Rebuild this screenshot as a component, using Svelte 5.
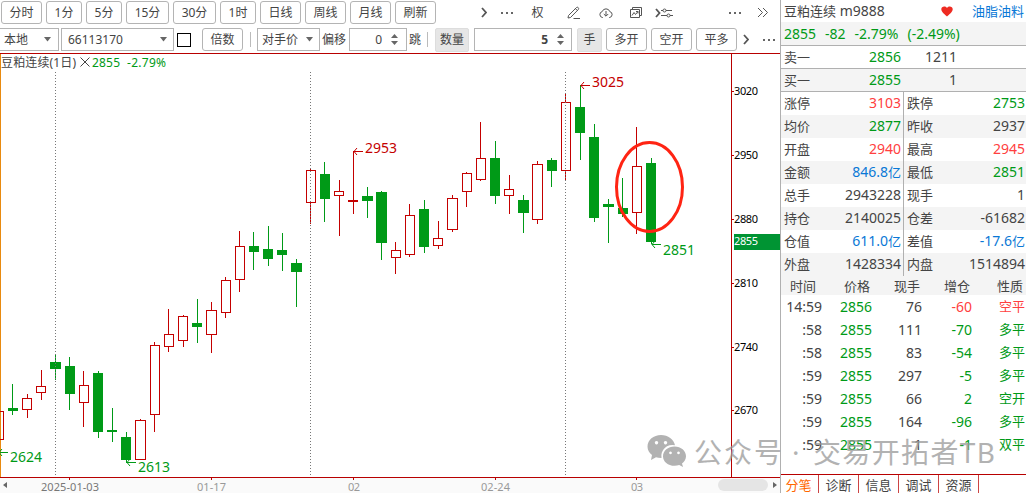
<script>
  const periods = ["分时", "1分", "5分", "15分", "30分", "1时", "日线", "周线", "月线", "刷新"];

  // x of the wick, high, low, body top, body bottom, body left, body width, rising
  const candles = [
    [-1, 411, 440, 411, 440, -6, 10, 1],
    [12, 384, 415, 408, 411, 8, 10, 0],
    [27, 394, 418, 398, 410, 22, 10, 1],
    [41, 370, 400, 386, 393, 36, 10, 1],
    [55, 354, 380, 362, 369, 50, 11, 0],
    [69, 357, 410, 366, 394, 65, 10, 0],
    [83, 371, 427, 385, 403, 79, 10, 1],
    [98, 371, 438, 373, 432, 93, 10, 0],
    [112, 408, 442, 430, 432, 107, 10, 0],
    [126, 432, 463, 437, 460, 121, 10, 0],
    [140, 419, 460, 420, 460, 135, 11, 1],
    [154, 342, 432, 345, 415, 150, 10, 1],
    [168, 309, 352, 334, 347, 164, 10, 1],
    [183, 315, 347, 316, 341, 178, 10, 1],
    [197, 299, 343, 323, 327, 192, 10, 0],
    [211, 302, 353, 310, 335, 206, 11, 1],
    [225, 277, 318, 280, 313, 221, 10, 1],
    [239, 231, 292, 246, 280, 235, 10, 1],
    [253, 232, 270, 246, 252, 249, 10, 0],
    [268, 226, 266, 249, 259, 263, 10, 0],
    [282, 233, 271, 250, 255, 277, 10, 0],
    [296, 259, 307, 263, 272, 291, 11, 0],
    [310, 168, 224, 170, 203, 306, 10, 1],
    [324, 162, 222, 174, 199, 320, 10, 0],
    [339, 180, 236, 191, 196, 334, 10, 1],
    [353, 151, 214, 200, 202, 348, 10, 1],
    [367, 187, 218, 196, 201, 362, 11, 0],
    [381, 191, 260, 192, 243, 376, 11, 0],
    [395, 242, 274, 250, 258, 391, 10, 1],
    [409, 204, 257, 215, 255, 405, 10, 1],
    [424, 200, 253, 209, 247, 419, 10, 0],
    [438, 221, 249, 238, 246, 433, 10, 1],
    [452, 195, 232, 198, 230, 447, 11, 1],
    [466, 172, 207, 173, 192, 462, 10, 1],
    [480, 122, 181, 158, 180, 476, 10, 1],
    [495, 141, 204, 158, 196, 490, 10, 0],
    [509, 175, 214, 189, 196, 504, 10, 1],
    [523, 195, 233, 200, 213, 518, 11, 0],
    [537, 161, 224, 164, 220, 532, 11, 1],
    [551, 158, 187, 160, 171, 547, 10, 0],
    [565, 94, 180, 102, 171, 561, 10, 1],
    [580, 85, 160, 107, 133, 575, 10, 0],
    [594, 124, 222, 137, 218, 589, 10, 0],
    [608, 199, 243, 204, 207, 603, 11, 0],
    [622, 178, 217, 208, 214, 618, 10, 0],
    [636, 127, 234, 166, 213, 632, 10, 1],
    [651, 158, 244, 163, 242, 646, 10, 0],
  ];

  const marks = [
    { text: "3025", x: 592, y: 87, ax: 581, ay: 85, up: true },
    { text: "2953", x: 365, y: 153, ax: 354, ay: 151, up: true },
    { text: "2851", x: 663, y: 255, ax: 652, ay: 244 },
    { text: "2624", x: 10, y: 462, ax: -1, ay: 452 },
    { text: "2613", x: 138, y: 472, ax: 127, ay: 462 },
  ];

  const scale = [[3020, 91], [2950, 155], [2880, 219], [2810, 283], [2740, 347], [2670, 410]];

  const dates = [
    { text: "2025-01-03", x: 41, w: 58, tick: 69, dark: true },
    { text: "01-17", x: 197, w: 29, tick: 211 },
    { text: "02", x: 348, w: 12, tick: 353 },
    { text: "02-24", x: 481, w: 29, tick: 495 },
    { text: "03", x: 631, w: 12, tick: 636 },
  ];

  const stats = [
    ["涨停", "3103", "up", "跌停", "2753", "down"],
    ["均价", "2877", "down", "昨收", "2937", ""],
    ["开盘", "2940", "up", "最高", "2945", "up"],
    ["金额", "846.8", "money", "最低", "2851", "down"],
    ["总手", "2943228", "", "现手", "1", ""],
    ["持仓", "2140025", "", "仓差", "-61682", ""],
    ["仓值", "611.0", "money", "差值", "-17.6", "money"],
    ["外盘", "1428334", "", "内盘", "1514894", ""],
  ];

  const ticks = [
    ["14:59", "2856", "76", "-60", "空平", "up"],
    [":58", "2855", "111", "-70", "多平", "down"],
    [":58", "2855", "83", "-54", "多平", "down"],
    [":59", "2855", "297", "-5", "多平", "down"],
    [":59", "2855", "66", "2", "空开", "down"],
    [":59", "2855", "164", "-96", "多平", "down"],
    [":59", "2855", "1", "-1", "双平", "down"],
  ];

  const tabs = ["分笔", "诊断", "信息", "调试", "资源"];
</script>

{#snippet spinner()}
  <svg class="spin" width="7" height="13" viewBox="0 0 7 13">
    <path d="M0 5 L3.5 1 L7 5Z M0 8 L3.5 12 L7 8Z" fill="#666" />
  </svg>
{/snippet}

{#snippet caret()}
  <svg class="caret" width="7" height="5" viewBox="0 0 7 5"><path d="M0 0H7L3.5 4.5Z" fill="#777" /></svg>
{/snippet}

{#snippet dots()}
  <svg width="14" height="4" viewBox="0 0 14 4"><path d="M1 1h2v2h-2z M6 1h2v2h-2z M11 1h2v2h-2z" fill="#555" /></svg>
{/snippet}

<div class="app">
  <div class="left">
    <div class="toolbar">
      <div class="row periods">
        <div class="buttons">
          {#each periods as p}
            <button>{p}</button>
          {/each}
        </div>
        <div class="icons">
          <svg width="6" height="11" viewBox="0 0 6 11"><path d="M1 1l4 4.5-4 4.5" class="thick" /></svg>
          {@render dots()}
          <span>权</span>
          <svg width="14" height="14" viewBox="0 0 14 14">
            <path d="M1.5 9.5L9.5 1.5Q10.3 .8 11.2 1.6T11.2 3.7L3.5 11.5L1 12Z M8.5 2.7l2 2 M6.5 12.5H13" />
          </svg>
          <svg width="14" height="14" viewBox="0 0 14 14">
            <path d="M4 11.5H3.5A3 3 0 0 1 3.2 5.6A4 4 0 0 1 10.8 5.6A3 3 0 0 1 10.5 11.5H10 M7 5v5 M4.8 8L7 10.2 9.2 8" />
          </svg>
          <svg width="14" height="14" viewBox="0 0 14 14">
            <path d="M3.5 3.500V1.500H12.500V9.500H11 M1.500 3.500H10.500V11.500H1.500Z M3 9.500L5 6.500 6.500 8.500 9 5.500 M7 5.500H9V7.500" />
          </svg>
          <svg width="18" height="12" viewBox="0 0 18 12">
            <path d="M1 2l3.5 4L1 10" class="thick" />
            <path d="M6 3.500h2 M11 3.500h6 M6 8.500h6 M15 8.500h3" />
            <circle cx="9.500" cy="3.500" r="1.500" /><circle cx="13.500" cy="8.500" r="1.500" />
          </svg>
          <i></i>
          {@render dots()}
          <i></i>
          <svg width="12" height="11" viewBox="0 0 12 11"><path d="M1 1l4.500 4.500L1 10 M6 1l4.500 4.500L6 10" /></svg>
        </div>
      </div>
      <div class="row order">
        <div class="box place">本地{@render caret()}</div>
        <div class="box account">66113170{@render caret()}</div>
        <div class="check"></div>
        <button>倍数</button>
        <div class="sep"></div>
        <div class="box price">对手价{@render caret()}</div>
        <span class="offset">偏移</span>
        <div class="box num">0{@render spinner()}</div>
        <span class="jump">跳</span>
        <div class="sep short"></div>
        <div class="tag">数量</div>
        <div class="box qty"><b>5</b>{@render spinner()}</div>
        <div class="tag hand">手</div>
        <button class="act">多开</button>
        <button class="act">空开</button>
        <button class="act">平多</button>
        <svg class="more" width="6" height="11" viewBox="0 0 6 11"><path d="M1 1l4 4.5-4 4.5" class="thick" /></svg>
        {@render dots()}
      </div>
    </div>

    <svg class="chart" width="780" height="439" viewBox="0 54 780 439">
      <rect x="0" y="478" width="780" height="15" fill="#fafafa" />
      <rect x="0" y="54" width="1" height="423" fill="#e88a10" />

      <text x="1" y="67" class="title" textLength="75">豆粕连续(1日)</text>
      <path d="M80.5 57.5l9 9 M89.5 57.5l-9 9" stroke="#444" fill="none" />
      <g class="title down">
        <text x="92" y="67" textLength="28">2855</text>
        <text x="127" y="67" textLength="39">-2.79%</text>
      </g>

      {#each candles as [x, high, low, top, bottom, left, w, rising]}
        {#if rising}
          <rect {x} y={high} width="1" height={top - high} fill="#c40000" />
          <rect {x} y={bottom} width="1" height={low - bottom} fill="#c40000" />
          <rect x={left + 0.5} y={top + 0.5} width={w - 1} height={bottom - top - 1} fill="none" stroke="#c40000" />
        {:else}
          <rect {x} y={high} width="1" height={low - high} fill="#009a17" />
          <rect x={left} y={top} width={w} height={bottom - top} fill="#009a17" />
        {/if}
      {/each}

      {#each [55, 310, 565] as x}
        <path d="M{x + 0.5} 72V476" stroke="#777" stroke-dasharray="1 2" />
      {/each}

      {#each marks as m}
        <g class={m.up ? "high" : "low"}>
          <path d="M{m.ax} {m.ay + 0.5}h9 M{m.ax + 3} {m.ay - 3}l-3 3.5 3 3.5" />
          <text x={m.x} y={m.y} textLength="32">{m.text}</text>
        </g>
      {/each}

      <ellipse cx="649.5" cy="187" rx="33" ry="44.5" fill="none" stroke="#ff2413" stroke-width="3" />

      <path d="M731.5 54V477 M0 477.5H780" stroke="#b80000" />
      {#each scale as [value, y]}
        <rect x="732" {y} width="2" height="1" fill="#b80000" />
        <text class="scale" x="734" y={y + 4} textLength="24">{value}</text>
      {/each}
      <rect x="734" y="234" width="46" height="16" fill="#009433" />
      <text class="scale now" x="734" y="245" textLength="24">2855</text>

      {#each dates as d}
        <rect x={d.tick} y="478" width="1" height="2" fill="#b80000" />
        <text class="date" class:dark={d.dark} x={d.x} y="491" textLength={d.w}>{d.text}</text>
      {/each}
      <path d="M7 482v6l-4-3z M773 482v6l4-3z" fill="#666" />
      <rect x="718" y="479" width="50" height="12" rx="6" fill="#e5e5e5" />
    </svg>
  </div>

  <div class="panel">
    <div class="name">
      <span><em>豆粕连续</em> m9888</span>
      <svg width="12" height="11" viewBox="0 0 12 11">
        <path d="M6 10.5C4 8.5.3 6 .3 3.2C.3.4 4.2-.6 6 2C7.8-.6 11.7.4 11.7 3.2C11.7 6 8 8.5 6 10.5Z" fill="#ee2b22" />
      </svg>
      <em class="money">油脂油料</em>
    </div>
    <div class="last down"><span>2855</span><span>-82</span><span>-2.79%</span><span>(-2.49%)</span></div>
    <div class="quote"><em>卖一</em><span class="down">2856</span><span>1211</span></div>
    <div class="quote grey"><em>买一</em><span class="down">2855</span><span>1</span></div>
    <div class="stats">
      {#each stats as [a, av, ac, b, bv, bc]}
        <div class="stat">
          <div><em>{a}</em><span class={ac}>{av}{#if ac === "money"}<em>亿</em>{/if}</span></div>
          <div><em>{b}</em><span class={bc}>{bv}{#if bc === "money"}<em>亿</em>{/if}</span></div>
        </div>
      {/each}
    </div>
    <div class="tick head"><em>时间</em><em>价格</em><em>现手</em><em>增仓</em><em>性质</em></div>
    <div class="ticks">
      {#each ticks as [time, price, vol, diff, kind, tone]}
        <div class="tick">
          <span>{time}</span><span class="down">{price}</span><span>{vol}</span>
          <span class={tone}>{diff}</span><em class={tone}>{kind}</em>
        </div>
      {/each}
    </div>
    <div class="tabs">
      {#each tabs as t, i}
        <div class:active={i === 0}>{t}</div>
      {/each}
    </div>
  </div>

  <svg class="watermark" width="350" height="40" viewBox="0 0 350 40">
    <path
      fill-rule="evenodd"
      d="M14 2C6.500 2 .5 7 .5 13.500C.5 17 2.200 20 5 22L4 27L9 24.200Q11 25 14.500 25A11 11 0 0 1 28 12.300C27 6.500 21 2 14 2Z
        M9.500 8a1.700 1.700 0 1 0 .01 0Z M18.500 8a1.700 1.700 0 1 0 .01 0Z
        M27.500 13.500C21 13.500 16 17.800 16 23.200C16 28.600 21 32.800 27.500 32.800Q30 32.800 32.200 32L36 34L35 30.500C37.500 28.700 39 26 39 23.200C39 17.800 34 13.500 27.500 13.500Z
        M23.500 18.500a1.400 1.400 0 1 0 .01 0Z M31.500 18.500a1.400 1.400 0 1 0 .01 0Z"
    />
    <text x="47" y="30" textLength="88">公众号</text>
    <text x="145" y="30">·</text>
    <text x="166" y="30" textLength="182">交易开拓者TB</text>
  </svg>
</div>

<style>
  :global(body) {
    background: #fff;
  }

  .app {
    position: relative;
    display: flex;
    width: 1026px;
    height: 493px;
    overflow: hidden;
    font-family: "Noto Sans", "Noto Sans CJK SC", sans-serif;
    font-size: 12px;
    color: #444;
  }

  .app * {
    box-sizing: border-box;
  }

  .left {
    width: 780px;
    flex: none;
  }

  svg {
    display: block;
    flex: none;
  }

  .toolbar {
    height: 54px;
    padding-top: 1px;
    border-bottom: 1px solid #b80000;
  }

  .row {
    display: flex;
    height: 23px;
    align-items: center;
    line-height: 21px;
    white-space: nowrap;
  }

  .row path,
  .row circle {
    fill: none;
    stroke: #555;
  }

  .row path[fill] {
    fill: #666;
    stroke: none;
  }

  .row .thick {
    stroke-width: 1.8;
  }

  .order {
    margin-top: 4px;
  }

  button {
    height: 23px;
    padding: 0;
    border: 1px solid #b4b4b4;
    border-radius: 3px;
    background: #fff;
    font: inherit;
    line-height: 20px;
    color: inherit;
  }

  .buttons {
    display: grid;
    grid-template-columns: 45px 40px 40px 47px 47px 40px 45px 45px 45px 45px;
    margin-left: 1px;
  }

  .buttons button {
    margin-right: 4px;
  }

  .icons {
    display: grid;
    grid-template-columns: 19px 27px 35px 37px 27px 34px 22px 52px 16px 8px 23px;
    margin-left: 34px;
    align-items: center;
    justify-items: center;
  }

  .box {
    display: flex;
    height: 23px;
    border: 1px solid #b4b4b4;
    align-items: center;
    justify-content: space-between;
  }

  .place {
    width: 59px;
    padding: 0 7px 0 4px;
    border-left: 0;
  }

  .account {
    width: 113px;
    margin-left: 2px;
    padding: 0 6px;
  }

  .check {
    width: 14px;
    height: 14px;
    margin: 0 11px 0 3px;
    border: 1px solid #000;
  }

  .order button {
    width: 41px;
  }

  .sep {
    width: 1px;
    height: 15px;
    margin: 0 6px 0 7px;
    background: #bbb;
  }

  .price {
    width: 63px;
    padding: 0 6px 0 4px;
  }

  .offset {
    width: 24px;
    margin: 0 3px 0 2px;
  }

  .num,
  .qty {
    width: 58px;
    padding-right: 8px;
    justify-content: flex-end;
    gap: 9px;
  }

  .jump {
    margin-left: 2px;
  }

  .sep.short {
    margin: 0 7px 0 6px;
  }

  .tag {
    width: 34px;
    height: 24px;
    border: 1px solid #ddd;
    border-radius: 2px;
    background: #e6e6e6;
    text-align: center;
  }

  .qty {
    width: 98px;
    margin: 0 5px;
    padding-right: 7px;
  }

  .hand {
    width: 25px;
  }

  .act {
    margin-left: 4px;
  }

  .more {
    margin: 0 13px 0 6px;
  }

  .chart text {
    fill: #444;
  }

  .chart .title {
    font-size: 12px;
  }

  .chart .down text,
  .chart .low text {
    fill: #009a17;
  }

  .high text,
  .low text {
    font-size: 14px;
  }

  .chart .high text {
    fill: #c40000;
  }

  .high path {
    fill: none;
    stroke: #c40000;
  }

  .low path {
    fill: none;
    stroke: #009a17;
  }

  .chart .scale {
    font-size: 11px;
    fill: #000;
  }

  .chart .now {
    fill: #fff;
  }

  .chart .date {
    font-size: 11px;
    fill: #999;
  }

  .chart .dark {
    fill: #777;
  }

  .panel {
    width: 246px;
    border-left: 1px solid #b0b0b0;
    font-size: 14px;
    line-height: 22px;
    white-space: nowrap;
  }

  em {
    font-size: 13px;
    font-style: normal;
  }

  .up {
    color: #ff4040;
  }

  .down {
    color: #009a17;
  }

  .money {
    color: #0a78d6;
  }

  .name {
    display: flex;
    height: 22px;
    padding-left: 3px;
    align-items: center;
  }

  .name span {
    width: 157px;
  }

  .name .money {
    margin-left: 19px;
  }

  .last {
    display: flex;
    height: 24px;
    padding-left: 3px;
    gap: 9px;
    border-bottom: 1px solid #b0b0b0;
    background: #f4f4f4;
    line-height: 24px;
  }

  .quote {
    display: grid;
    grid-template-columns: 50px 67px 56px;
    height: 23px;
    padding-left: 3px;
    border-bottom: 1px solid #b0b0b0;
    text-align: right;
  }

  .quote em {
    text-align: left;
  }

  .grey {
    background: #f4f4f4;
  }

  .stats {
    height: 184px;
    border-bottom: 1px solid #b0b0b0;
  }

  .stat {
    display: grid;
    grid-template-columns: 123px 122px;
    height: 23px;
  }

  .stat:nth-child(even) {
    background: #f4f4f4;
  }

  .stat div {
    display: flex;
    padding: 0 2px 0 3px;
    justify-content: space-between;
  }

  .stat div:first-child {
    border-right: 1px solid #b0b0b0;
  }

  .stat div:last-child {
    padding-right: 1px;
  }

  .tick {
    display: grid;
    grid-template-columns: 41px 50px 50px 50px 53px;
    height: 23px;
    text-align: right;
    line-height: 23px;
  }

  .tick.head {
    grid-template-columns: 35px 54px 50px 50px 53px;
    height: 19px;
    background: #f4f4f4;
    line-height: 20px;
  }

  .ticks {
    height: 179px;
  }

  .tabs {
    display: flex;
    border-top: 1px solid #b80000;
    font-size: 13px;
    line-height: 20px;
  }

  .tabs div {
    width: 40px;
    height: 19px;
    border-right: 1px solid #c44;
    text-align: center;
  }

  .tabs div:first-child {
    width: 38px;
    padding-right: 2px;
  }

  .active {
    color: #f60;
  }

  .watermark {
    position: absolute;
    left: 647px;
    top: 433px;
    fill: #999;
    opacity: 0.75;
  }

  .watermark text {
    font-size: 28px;
  }
</style>
